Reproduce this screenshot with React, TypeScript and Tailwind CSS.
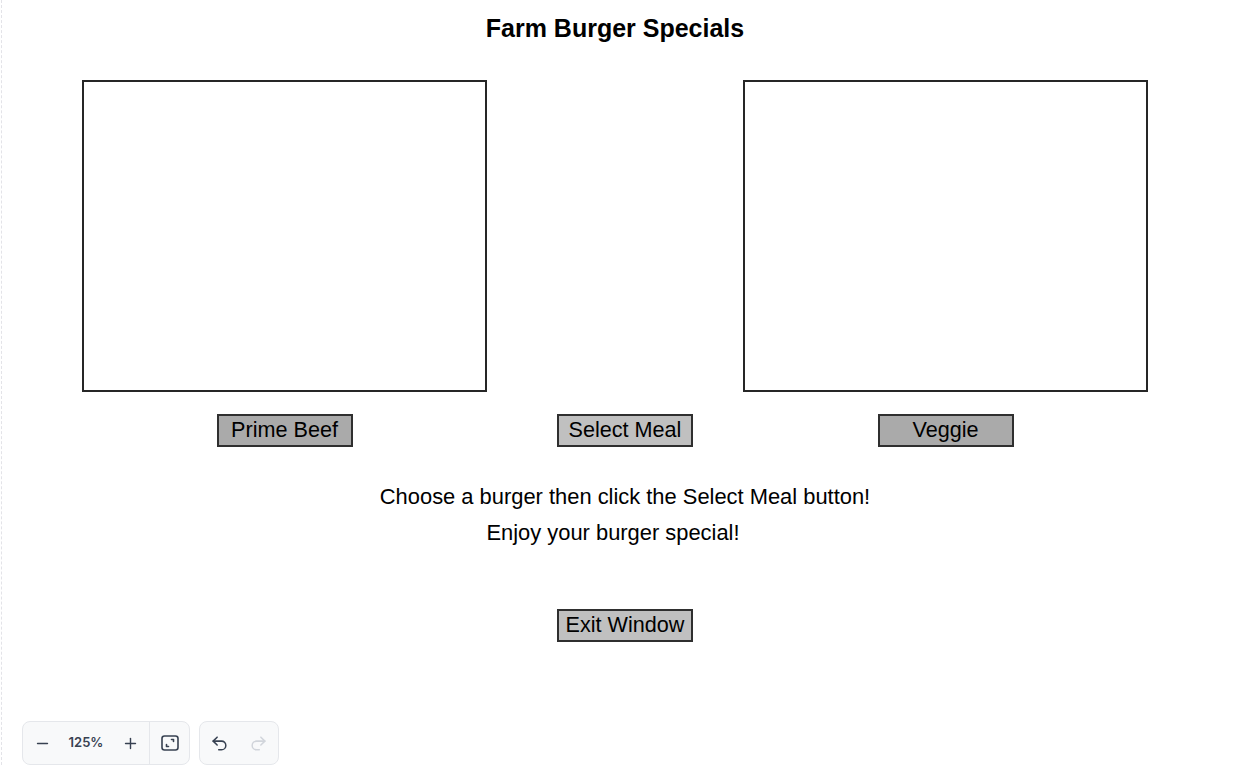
import { Minus, Plus, Undo2, Redo2 } from 'lucide-react';

function FitIcon() {
    return (
        <svg width="20" height="20" viewBox="0 0 20 20" fill="none" stroke="currentColor" strokeWidth={1.6} strokeLinecap="round" strokeLinejoin="round">
            <rect x="2" y="3" width="16" height="14" rx="2.5" />
            <path d="M11.5 6.5h2v2" />
            <path d="M8.5 13.5h-2v-2" />
        </svg>
    );
}

function Box() {
    return <div className="w-[405px] h-[312px] border-2 border-[#262626] bg-white" />;
}

function TkButton({ label, light }: { label: string; light?: boolean }) {
    return (
        <button
            className={`w-[136px] h-[33px] pb-[2px] border-2 border-[#2f2f2f] text-[21.6px] leading-none text-black ${light ? 'bg-[#c0c0c0]' : 'bg-[#aaaaaa]'}`}
        >
            {label}
        </button>
    );
}

export default function App() {
    return (
        <div className="relative w-[1260px] h-[765px] bg-white overflow-hidden" style={{ fontFamily: '"Liberation Sans", Arial, sans-serif' }}>
            {/* dashed ruler line on the left edge */}
            <div className="absolute left-[1px] top-0 bottom-0 border-l border-dashed border-[#e3e3e8]" />

            <div className="w-[1230px] flex flex-col items-center">
                <h1 className="mt-[13px] text-[25px] leading-[30px] font-bold text-black">Farm Burger Specials</h1>

                <div className="mt-[37px] flex gap-[256px]">
                    <Box />
                    <Box />
                </div>

                <div className="mt-[22px] flex">
                    <div className="w-[405px] flex justify-center">
                        <TkButton label="Prime Beef" />
                    </div>
                    <div className="w-[256px] flex justify-center pl-[20px]">
                        <TkButton label="Select Meal" light />
                    </div>
                    <div className="w-[405px] flex justify-center">
                        <TkButton label="Veggie" />
                    </div>
                </div>

                <p className="mt-[37px] pl-[20px] text-[21.9px] leading-[26px] text-black">Choose a burger then click the Select Meal button!</p>
                <p className="mt-[10px] pr-[4px] text-[21.9px] leading-[26px] text-black">Enjoy your burger special!</p>

                <div className="mt-[63px] pl-[20px]">
                    <TkButton label="Exit Window" light />
                </div>
            </div>

            {/* zoom / history toolbar */}
            <div className="absolute left-[22px] top-[721px] flex gap-[9px]">
                <div className="flex items-center h-[44px] rounded-lg border border-[#e5e7eb] bg-[#f8f9fa] text-[#374151]">
                    <div className="w-[38px] flex justify-center"><Minus size={17} strokeWidth={2} /></div>
                    <div className="w-[50px] text-center text-[13px] font-semibold" style={{ fontFamily: 'Inter, sans-serif' }}>125%</div>
                    <div className="w-[38px] flex justify-center"><Plus size={17} strokeWidth={2} /></div>
                    <div className="h-full border-l border-[#e5e7eb] w-[40px] flex items-center justify-center"><FitIcon /></div>
                </div>
                <div className="flex items-center h-[44px] rounded-lg border border-[#e5e7eb] bg-[#f8f9fa] px-[10px] gap-[20px]">
                    <Undo2 size={19} strokeWidth={1.9} className="text-[#374151]" />
                    <Redo2 size={19} strokeWidth={1.9} className="text-[#d1d5db]" />
                </div>
            </div>
        </div>
    );
}
